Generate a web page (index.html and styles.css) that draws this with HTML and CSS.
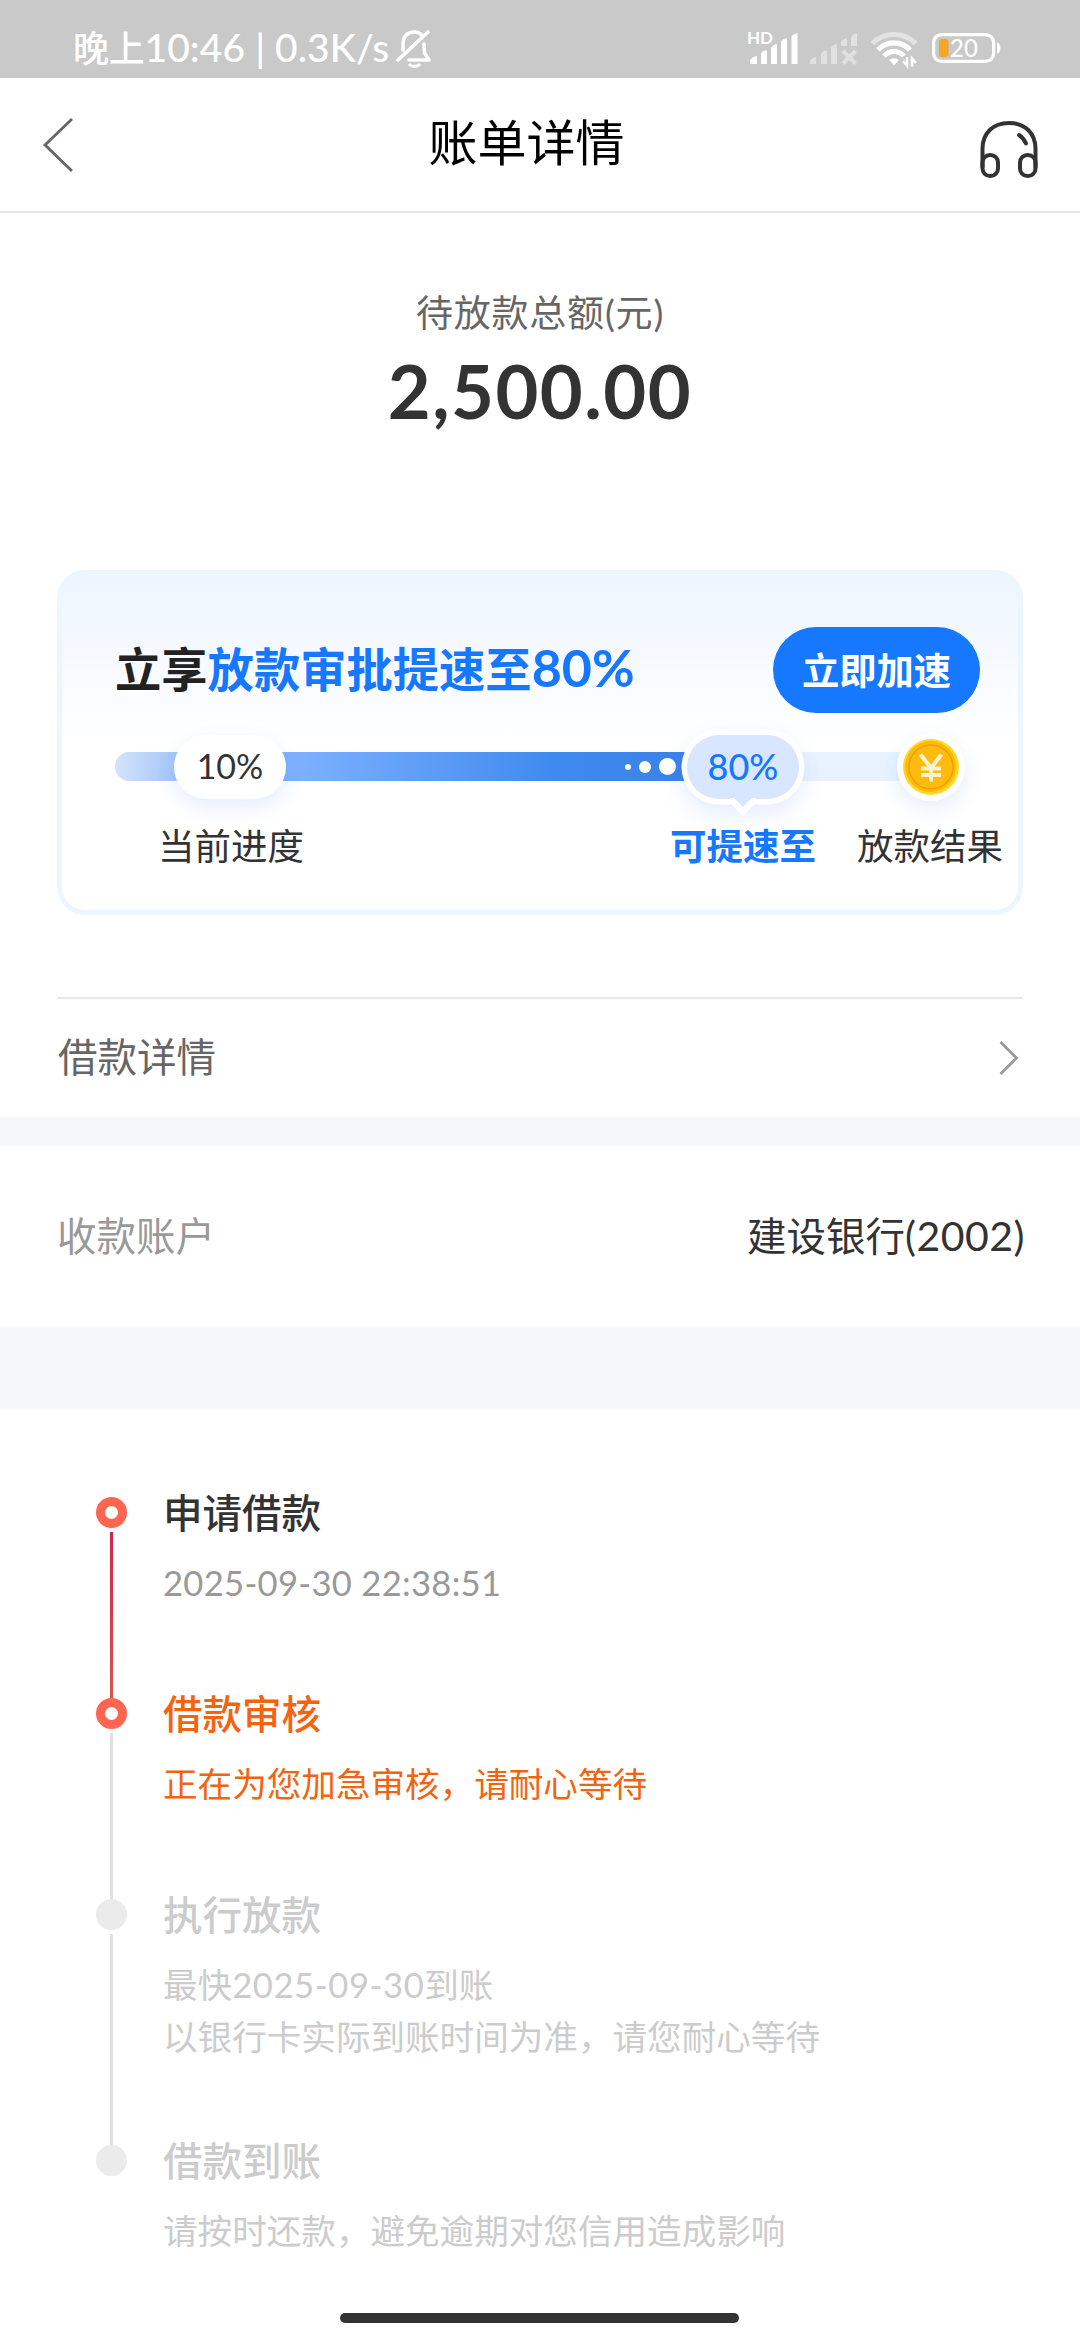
FILE: index.html
```html
<!DOCTYPE html>
<html lang="zh-CN">
<head>
<meta charset="utf-8">
<title>账单详情</title>
<link rel="stylesheet" href="styles.css">
</head>
<body>
<div class="statusbar">
  <div class="status-left">
    <span class="clock"><span class="clock-cn">晚上</span>10:46 | 0.3K/s</span>
    <svg class="bell" width="36" height="40" viewBox="0 0 36 40" fill="none" stroke="#fff" stroke-width="3.6" stroke-linecap="round" stroke-linejoin="round">
      <path d="M7 21V15C7 7 12 3 18 3C21 3 24 4 26 6.500"/><path d="M28 15L28.500 24L33 31H13"/><path d="M32 3L2 31"/><path d="M14 36Q18.500 39 23 36" stroke-width="3.200"/>
    </svg>
  </div>
  <div class="status-right">
    <svg width="260" height="44" viewBox="0 0 260 44">
      <text class="hd" x="0" y="16">HD</text>
      <g fill="#fff">
        <path d="M3 36V33Q4 29 10 28V36Z"/><path d="M14 36V25Q15 23 20 22V36Z"/><path d="M24 36V20Q25 17 30 16V36Z"/><path d="M34 36V14Q35 11 40 10V36Z"/><path d="M44.500 36V9Q45.500 6 50.500 5V36Z"/>
      </g>
      <g fill="#e0e0e0">
        <path d="M63 36V33Q64 30 69 29V36Z"/><path d="M74 36V26Q75 23 80 22V36Z"/><path d="M84 36V20Q85 17 90 16V36Z"/><path d="M94 18V14Q95 11 100 10V18Z"/><path d="M104 18V9Q105 6 110 5V18Z"/>
      </g>
      <path d="M96 23L108.500 35.500M108.500 23L96 35.500" stroke="#e0e0e0" stroke-width="4"/>
      <g fill="none" stroke="#fff" stroke-width="5.200">
        <path d="M125.500 15.500C137 3.500 157 3.500 168.500 15.500" stroke="#e3e3e3"/><path d="M131 22C140 12.500 154 12.500 163 22"/><path d="M137 28C143 22 151 22 157 28"/>
      </g>
      <path d="M142 32Q147 28.500 152 32L147 37.500Z" fill="#fff"/>
      <path d="M156 33L160 37.500V29M165 38.500V30.500L169 35" fill="none" stroke="#fff" stroke-width="2.600"/>
      <rect x="186.600" y="6.600" width="60" height="26.800" rx="8" fill="none" stroke="#fff" stroke-width="3.200"/>
      <rect x="192" y="11" width="9.500" height="18" rx="3" fill="#f5a623"/>
      <path d="M250 14.500Q253.500 15 253.500 20T250 25.500Z" fill="#fff"/>
      <text class="battery-text" x="203" y="28.500">20</text>
    </svg>
  </div>
</div>

<header class="navbar">
  <svg width="32" height="56" viewBox="0 0 32 56" fill="none" stroke="#666" stroke-width="2.800"><path d="M30 2L3 28L30 54"/></svg>
  <h1>账单详情</h1>
  <svg class="headset" width="60" height="60" viewBox="0 0 60 60" fill="none" stroke="#333" stroke-width="4" stroke-linecap="round">
    <path d="M3.500 48V30C3.500 14 14 4 30 4S56.500 14 56.500 30V48"/>
    <rect x="3.500" y="36" width="15.500" height="21" rx="7.500"/><rect x="41" y="36" width="15.500" height="21" rx="7.500"/>
    <path d="M40 16Q44.500 19 47 24.500"/>
  </svg>
</header>

<section class="total">
  <p class="total-label">待放款总额(元)</p>
  <p class="total-amount">2,500.00</p>
</section>

<section class="card">
  <div class="card-head">
    <h2>立享<em>放款审批提速至<span class="num">80%</span></em></h2>
    <button class="boost">立即加速</button>
  </div>
  <div class="track">
    <div class="track-fill"><i class="dot dot-s"></i><i class="dot dot-m"></i><i class="dot dot-l"></i></div>
    <div class="pill">10%</div>
    <div class="bubble">80%
      <svg class="tail" width="26" height="18" viewBox="0 0 26 18"><path d="M0 5L13 18L26 5V0H0Z" fill="#fff"/><path d="M4 0L13 9L22 0Z" fill="#d8e7ff"/></svg>
    </div>
    <svg class="coin" width="68" height="68" viewBox="0 0 68 68">
      <circle cx="34" cy="34" r="34" fill="#fff"/><circle cx="34" cy="34" r="28" fill="#ffd91f"/>
      <circle cx="33.500" cy="33.500" r="25.500" fill="#ffb90d"/><circle cx="34" cy="34" r="22" fill="#ffbb10" stroke="#f0a000" stroke-width="1.500"/>
      <path d="M23.500 21.500L34 35L44.500 21.500M34 35V48.500M24 35.500H44M24 42H44" fill="none" stroke="#fff3cf" stroke-width="4"/>
    </svg>
  </div>
  <div class="track-labels"><span class="l1">当前进度</span><span class="l2">可提速至</span><span class="l3">放款结果</span></div>
</section>

<section class="detail">
  <span class="detail-label">借款详情</span>
  <svg width="20" height="36" viewBox="0 0 20 36" fill="none" stroke="#999" stroke-width="2.800"><path d="M1.500 2L17.500 18L1.500 34"/></svg>
</section>
<section class="account">
  <span class="account-label">收款账户</span>
  <span class="account-value">建设银行<span class="card-no">(2002)</span></span>
</section>

<ol class="timeline">
  <li class="step done"><h3>申请借款</h3><p class="date">2025-09-30 22:38:51</p></li>
  <li class="step active"><h3>借款审核</h3><p>正在为您加急审核，请耐心等待</p></li>
  <li class="step long"><h3>执行放款</h3><p>最快<span class="day">2025-09-30</span>到账<br>以银行卡实际到账时间为准，请您耐心等待</p></li>
  <li class="step last"><h3>借款到账</h3><p>请按时还款，避免逾期对您信用造成影响</p></li>
</ol>
<div class="home"></div>
</body>
</html>
```
FILE: styles.css
```css
* { box-sizing: border-box; margin: 0; padding: 0; }
body {
  width: 1080px; height: 2340px; background: #fff; color: #333;
  font-family: Lato, "Noto Sans CJK SC", sans-serif;
  display: flex; flex-direction: column; overflow: hidden;
}
.statusbar {
  height: 78px; flex: none; background: #c9c9c9; color: #fff;
  display: flex; justify-content: space-between; padding: 0 73px 0 73px;
}
.status-left { display: flex; gap: 7px; }
.clock { font-size: 39px; line-height: 95px; font-weight: 500; white-space: pre; letter-spacing: .1px; }
.clock-cn { font-size: 36px; letter-spacing: -.3px; }
.bell { margin-top: 29px; }
.status-right { margin-top: 28px; height: 44px; }
.hd { font: 700 17px Lato, sans-serif; fill: #fff; }
.battery-text { font: 500 24px Lato, sans-serif; fill: #fff; }

.navbar {
  height: 135px; flex: none; border-bottom: 2px solid #e8e8e8;
  display: flex; align-items: center; justify-content: space-between; padding: 0 41px 0 42px;
}
.navbar h1 { font-size: 49px; line-height: 60px; font-weight: 400; color: #000; margin: 0 0 5px; }
.headset { margin-top: 9px; }

.total { height: 357px; flex: none; text-align: center; padding-top: 72px; }
.total-label { font-size: 37px; line-height: 56px; color: #666; letter-spacing: .8px; }
.total-amount { font-size: 74px; line-height: 90px; font-weight: 700; letter-spacing: 1.500px; margin-top: 5px; }

.card {
  width: 966px; height: 345px; flex: none; margin: 0 57px; border: 5px solid #edf5ff; border-radius: 28px;
  background: linear-gradient(#edf5ff, #fff 165px);
  padding: 52px 38px 0 53px;
}
.card-head { display: flex; justify-content: space-between; align-items: center; height: 86px; }
.card h2 { font-size: 46.300px; line-height: 60px; font-weight: 700; color: #222; white-space: nowrap; margin-bottom: 4px; }
.card em { font-style: normal; color: #1677ff; }
.card h2 .num { font-size: 52px; }
.boost {
  width: 207px; height: 86px; border: 0; border-radius: 43px; background: #1677ff; color: #fff;
  font: 700 37.300px Lato, "Noto Sans CJK SC", sans-serif; padding-bottom: 3px;
}
.track { position: relative; height: 29px; width: 815px; margin-top: 39px; border-radius: 15px; background: #e8f2ff; }
.track-fill {
  width: 600px; height: 29px; border-radius: 15px 0 0 15px;
  background: linear-gradient(90deg, #d3e3fb 0, #a5c6f8 60px, #7fb2ff 170px, #3f8aef 440px, #3a7fe6);
  display: flex; align-items: center; justify-content: flex-end; padding-right: 39px;
}
.dot { background: #fff; border-radius: 50%; }
.dot-s { width: 6px; height: 6px; margin-right: 8px; }
.dot-m { width: 12px; height: 12px; margin-right: 8px; }
.dot-l { width: 17px; height: 17px; }
.pill, .bubble {
  position: absolute; top: -17px; width: 112px; height: 64px; border-radius: 32px;
  font-size: 36px; line-height: 62px; text-align: center;
}
.pill { left: 59px; background: #fff; font-size: 34px; box-shadow: 0 8px 20px rgba(50,110,255,.12); }
.bubble { left: 572px; background: #d8e7ff; color: #1677ff; box-shadow: 0 0 0 5.500px #fff, 0 10px 24px 4px rgba(50,110,255,.14); font-weight: 500; }
.tail { position: absolute; left: 43px; top: 63px; }
.coin { position: absolute; left: 782px; top: -19px; border-radius: 50%; box-shadow: 0 8px 20px rgba(50,110,255,.12); }
.track-labels { display: flex; font-size: 36.500px; line-height: 54px; margin-top: 38px; white-space: nowrap; }
.track-labels span { flex: none; }
.l1 { margin-left: 43px; width: 512px; }
.l2 { width: 187px; color: #1677ff; font-weight: 700; }

.detail {
  flex: none; height: 120px; margin: 82px 57px 0; border-top: 2px solid #e8e8e8;
  display: flex; align-items: center; justify-content: space-between; padding-right: 4px;
  font-size: 39.500px; color: #666;
}
.detail-label, .account-label, .account-value { margin-bottom: 7px; }
.detail-label { padding-left: 1px; }
.account {
  flex: none; height: 292px; border: solid #f6f7f9; border-width: 29px 0 82px;
  display: flex; align-items: center; justify-content: space-between; padding: 0 55px 0 57px; font-size: 39.500px;
}
.account-label { color: #999; }
.card-no { font-size: 41px; letter-spacing: .5px; }

.timeline { list-style: none; flex: none; height: 904px; padding: 75px 0 0 96px; }
.step { position: relative; height: 201px; padding-left: 67px; color: #ccc; }
.step::before {
  content: ""; box-sizing: border-box; position: absolute; left: 0; top: 13px; width: 31px; height: 31px; border-radius: 50%; background: #ebebeb;
}
.step::after { content: ""; position: absolute; left: 14px; top: 48px; bottom: -13px; width: 3px; background: #e0e0e0; }
.step h3 { font-size: 39.500px; line-height: 58px; font-weight: 500; }
.step p { font-size: 34.600px; line-height: 52px; margin-top: 15px; }
.done::before, .active::before { background: #fff; border: 9px solid #ff6652; }
.done::after { background: linear-gradient(#d0264a, #d9534f); }
.done h3 { color: #333; }
.done p { color: #999; letter-spacing: .3px; }
.day { letter-spacing: .6px; }
.active { color: #f2640f; }
.long { height: 246px; }
.last::after { display: none; }
.home { width: 399px; height: 10px; border-radius: 5px; background: #333; margin: 0 0 0 340px; }
```
